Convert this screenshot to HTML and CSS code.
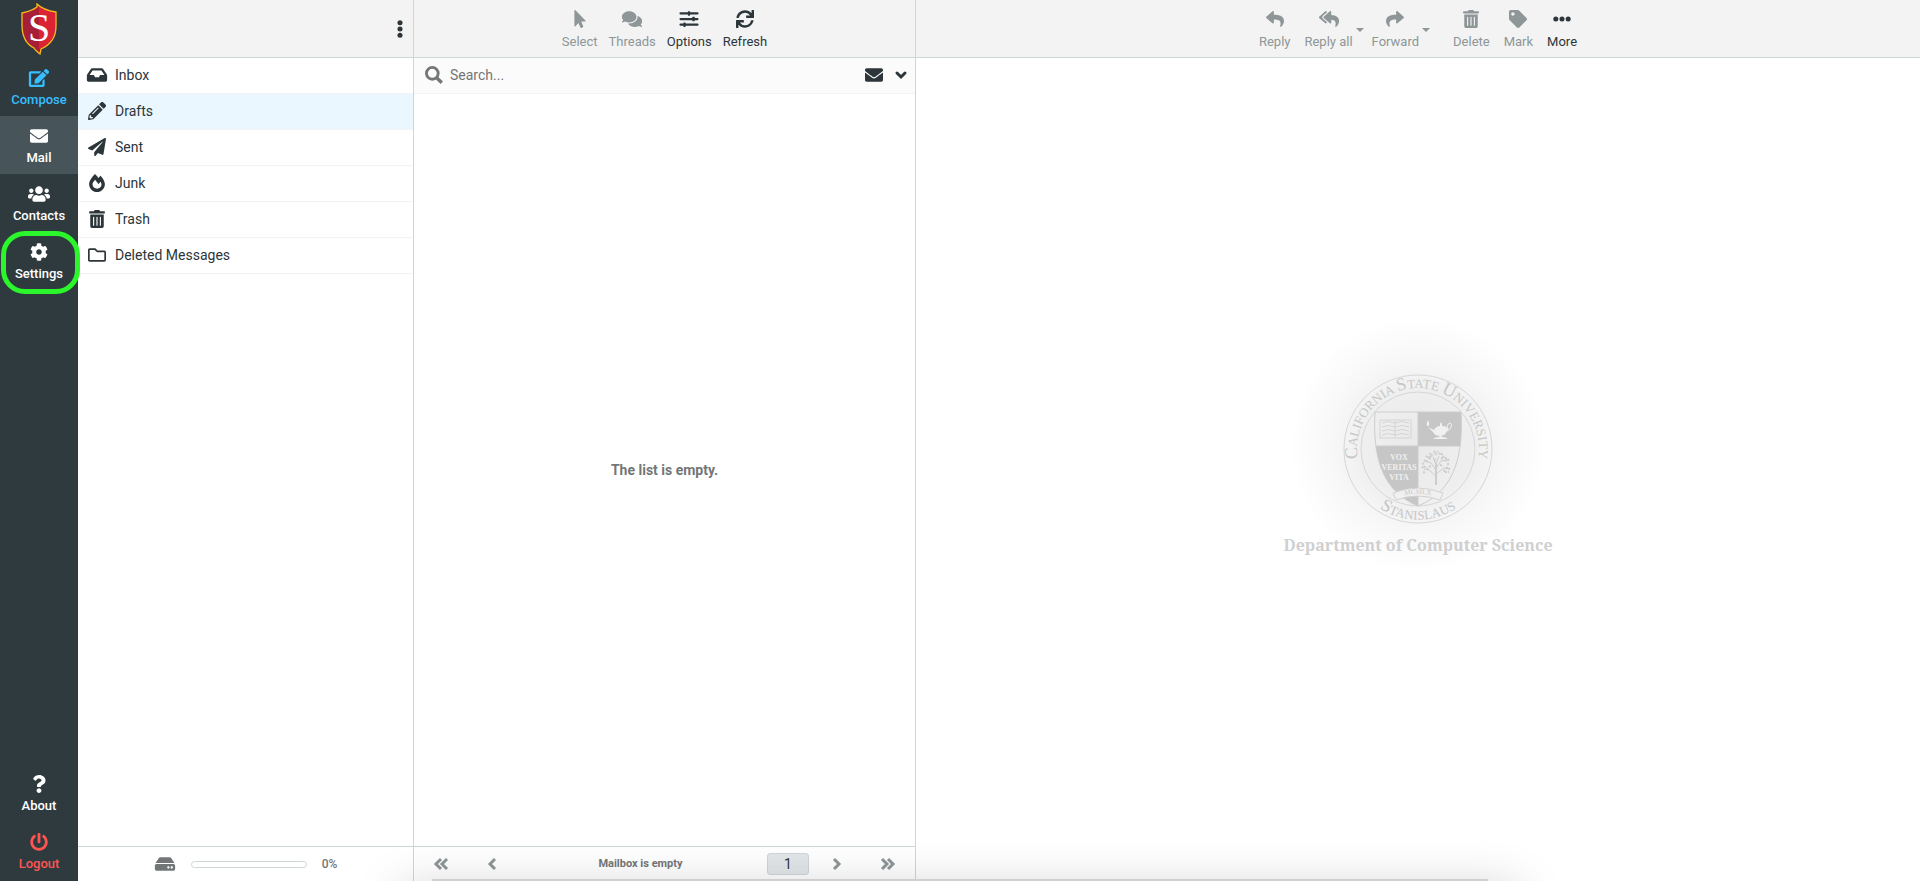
FILE: index.html
```html
<!DOCTYPE html>
<html lang="en">
<head>
    <meta charset="UTF-8">
    <title>Webmail - Drafts</title>
    <link rel="stylesheet" href="styles.css">
</head>
<body>
    <!-- icon set -->
    <svg class="sprite" aria-hidden="true">
        <symbol id="compose" viewBox="0 0 576 512"><path d="M402.600 83.200l90.200 90.200c3.800 3.800 3.800 10 0 13.800L274.400 405.600l-92.800 10.300c-12.400 1.400-22.900-9.100-21.500-21.500l10.300-92.800L388.800 83.200c3.800-3.800 10-3.800 13.800 0zm162-22.900l-48.800-48.800c-15.200-15.200-39.900-15.200-55.200 0l-35.400 35.400c-3.800 3.800-3.800 10 0 13.800l90.200 90.200c3.800 3.800 10 3.800 13.800 0l35.400-35.400c15.200-15.300 15.200-40 0-55.200zM384 346.200V448H64V128h229.800c3.200 0 6.200-1.300 8.500-3.500l40-40c7.600-7.600 2.200-20.500-8.500-20.500H48C21.500 64 0 85.500 0 112v352c0 26.500 21.500 48 48 48h352c26.500 0 48-21.500 48-48V306.200c0-10.700-12.900-16-20.500-8.500l-40 40c-2.200 2.300-3.500 5.300-3.500 8.500z"/></symbol>
        <symbol id="envelope" viewBox="0 0 512 512"><path d="M502.300 190.800c3.900-3.100 9.700-.2 9.700 4.700V400c0 26.500-21.500 48-48 48H48c-26.500 0-48-21.500-48-48V195.600c0-5 5.700-7.800 9.700-4.700 22.400 17.400 52.100 39.500 154.100 113.600 21.100 15.400 56.700 47.800 92.200 47.600 35.700.3 72-32.800 92.300-47.600 102-74.100 131.600-96.300 154-113.700zM256 320c23.200.4 56.600-29.200 73.400-41.400 132.700-96.300 142.800-104.700 173.400-128.700 5.800-4.500 9.200-11.500 9.200-18.900v-19c0-26.500-21.500-48-48-48H48c-26.500 0-48 21.500-48 48v19c0 7.400 3.400 14.300 9.200 18.900 30.600 23.900 40.700 32.400 173.400 128.700 16.800 12.200 50.200 41.800 73.400 41.400z"/></symbol>
        <symbol id="users" viewBox="0 0 640 512"><path d="M96 224c35.300 0 64-28.700 64-64s-28.700-64-64-64-64 28.700-64 64 28.700 64 64 64zm448 0c35.300 0 64-28.700 64-64s-28.700-64-64-64-64 28.700-64 64 28.700 64 64 64zm32 32h-64c-17.600 0-33.500 7.100-45.100 18.600 40.300 22.100 68.900 62 75.100 109.400h66c17.700 0 32-14.300 32-32v-32c0-35.300-28.700-64-64-64zm-256 0c61.900 0 112-50.100 112-112S381.900 32 320 32 208 82.100 208 144s50.100 112 112 112zm76.800 32h-8.300c-20.800 10-43.900 16-68.500 16s-47.600-6-68.500-16h-8.300C179.600 288 128 339.600 128 403.200V432c0 26.500 21.500 48 48 48h288c26.500 0 48-21.500 48-48v-28.800c0-63.600-51.600-115.200-115.200-115.200zm-223.700-13.400C161.500 263.100 145.600 256 128 256H64c-35.300 0-64 28.700-64 64v32c0 17.700 14.300 32 32 32h65.900c6.300-47.400 34.900-87.300 75.200-109.400z"/></symbol>
        <symbol id="cog" viewBox="0 0 512 512"><path d="M487.400 315.700l-42.600-24.600c4.300-23.200 4.300-47 0-70.200l42.600-24.600c4.900-2.800 7.100-8.600 5.500-14-11.100-35.600-30-67.800-54.700-94.600-3.800-4.100-10-5.100-14.800-2.300L380.800 110c-17.900-15.400-38.500-27.300-60.800-35.100V25.800c0-5.600-3.900-10.500-9.400-11.700-36.700-8.200-74.300-7.800-109.200 0-5.500 1.200-9.400 6.100-9.400 11.700V75c-22.200 7.900-42.800 19.800-60.800 35.100L88.700 85.500c-4.900-2.800-11-1.900-14.800 2.300-24.700 26.700-43.600 58.900-54.700 94.600-1.700 5.400.6 11.200 5.500 14L67.300 221c-4.300 23.200-4.300 47 0 70.200l-42.600 24.600c-4.900 2.800-7.100 8.600-5.500 14 11.100 35.600 30 67.800 54.700 94.600 3.800 4.100 10 5.100 14.800 2.300l42.600-24.600c17.900 15.400 38.500 27.300 60.800 35.100v49.200c0 5.600 3.900 10.500 9.400 11.700 36.700 8.200 74.300 7.800 109.200 0 5.500-1.200 9.400-6.100 9.400-11.700v-49.200c22.200-7.900 42.800-19.800 60.800-35.100l42.600 24.600c4.900 2.800 11 1.900 14.800-2.300 24.700-26.700 43.600-58.900 54.700-94.600 1.500-5.500-.7-11.300-5.600-14.100zM256 336c-44.100 0-80-35.900-80-80s35.900-80 80-80 80 35.900 80 80-35.900 80-80 80z"/></symbol>
        <symbol id="question" viewBox="0 0 384 512"><path d="M202 0C122 0 70.500 32.700 29.900 91c-7.400 10.600-5.100 25.100 5.200 32.900l43.100 32.700c10.400 7.900 25.100 6 33.300-4.100 25-31.400 43.600-49.500 82.700-49.500 30.800 0 68.800 19.800 68.800 49.600 0 22.600-18.600 34.200-49 51.200-35.400 19.900-82.300 44.600-82.300 106.400V320c0 13.300 10.700 24 24 24h72.500c13.300 0 24-10.700 24-24v-5.800c0-42.900 125.300-44.600 125.300-160.600C377.500 66.300 286.900 0 202 0zM192 373.500c-38.200 0-69.300 31-69.300 69.200S153.800 512 192 512s69.300-31.100 69.300-69.300-31.100-69.200-69.300-69.200z"/></symbol>
        <symbol id="power" viewBox="0 0 512 512"><path d="M400 54.100c63 45 104 118.600 104 201.900 0 136.800-110.800 247.700-247.500 248C120 504.300 8.200 393 8 256.400 7.900 173.100 48.900 99.300 111.800 54.200c11.700-8.300 28-4.800 35 7.700L162.600 90c5.900 10.500 3.100 23.800-6.600 31-41.500 30.800-68 79.600-68 134.900-.1 92.300 74.500 168.100 168 168.100 91.600 0 168.600-74.200 168-169.100-.3-51.800-24.700-101.800-68.100-134-9.700-7.200-12.400-20.500-6.500-30.900l15.800-28.100c7-12.400 23.200-16.100 34.800-7.800zM296 264V24c0-13.300-10.700-24-24-24h-32c-13.300 0-24 10.700-24 24v240c0 13.300 10.700 24 24 24h32c13.300 0 24-10.700 24-24z"/></symbol>
        <symbol id="inbox" viewBox="0 0 576 512"><path d="M567.900 243.900L462.200 85.400A48 48 0 0 0 422.300 64H153.700a48 48 0 0 0-39.900 21.400L8.100 243.900A48 48 0 0 0 0 270.500V400c0 26.500 21.500 48 48 48h480c26.500 0 48-21.500 48-48V270.500a48 48 0 0 0-8.100-26.600zM162.300 128h251.400l85.400 128H376l-32 64H232l-32-64H76.900z"/></symbol>
        <symbol id="pencil" viewBox="0 0 512 512"><path d="M497.900 142.100l-46.100 46.100c-4.700 4.700-12.300 4.700-17 0l-111-111c-4.700-4.700-4.700-12.300 0-17l46.100-46.100c18.700-18.700 49.100-18.700 67.900 0l60.100 60.100c18.800 18.700 18.800 49.100 0 67.900zM284.200 99.800L21.600 362.400.4 483.900c-2.900 16.400 11.400 30.600 27.800 27.800l121.500-21.300 262.600-262.600c4.700-4.700 4.700-12.300 0-17l-111-111c-4.800-4.700-12.400-4.700-17.100 0zM124.100 339.900c-5.500-5.500-5.500-14.300 0-19.800l154-154c5.500-5.500 14.300-5.500 19.800 0s5.500 14.300 0 19.800l-154 154c-5.500 5.500-14.300 5.500-19.800 0zM88 424h48v36.300l-64.500 11.300-31.100-31.100L51.700 376H88v48z"/></symbol>
        <symbol id="plane" viewBox="0 0 512 512"><path d="M476 3.200L12.500 270.600c-18.100 10.400-15.800 35.600 2.200 43.200L121 358.400l287.300-253.200c5.500-4.900 13.300 2.600 8.600 8.300L176 407v80.500c0 23.600 28.500 32.900 42.500 15.800L282 426l124.600 52.200c14.200 6 30.400-2.900 33-18.200l72-432C515 7.800 493.300-6.800 476 3.200z"/></symbol>
        <symbol id="fire" viewBox="0 0 448 512"><path d="M323.600 51.200c-20.800 19.300-39.600 39.600-56.300 60C240.100 73.600 206.300 35.500 168 0 69.700 91.200 0 210 0 281.600 0 408.900 100.300 512 224 512s224-103.100 224-230.400c0-53.300-52-163.100-124.400-230.400zM304.100 391.900C282.400 407 255.700 416 226.900 416 154.700 416 96 368.300 96 290.800c0-38.700 24.300-72.700 72.800-130.800 6.900 8 98.800 125.300 98.800 125.300l58.600-66.800c4.200 6.800 7.900 13.500 11.300 19.900 27.400 52.200 15.800 119-33.400 153.500z"/></symbol>
        <symbol id="trash" viewBox="0 0 448 512"><path d="M32 464a48 48 0 0 0 48 48h288a48 48 0 0 0 48-48V128H32zm272-256a16 16 0 0 1 32 0v224a16 16 0 0 1-32 0zm-96 0a16 16 0 0 1 32 0v224a16 16 0 0 1-32 0zm-96 0a16 16 0 0 1 32 0v224a16 16 0 0 1-32 0zM432 32H312l-9.400-18.700A24 24 0 0 0 281.100 0H166.800a23.700 23.700 0 0 0-21.400 13.300L136 32H16A16 16 0 0 0 0 48v32a16 16 0 0 0 16 16h416a16 16 0 0 0 16-16V48a16 16 0 0 0-16-16z"/></symbol>
        <symbol id="folder" viewBox="0 0 512 512"><path d="M464 128H272l-54.600-54.600c-6-6-14.200-9.400-22.700-9.400H48C21.500 64 0 85.500 0 112v288c0 26.500 21.500 48 48 48h416c26.500 0 48-21.500 48-48V176c0-26.500-21.500-48-48-48zm0 272H48V112h140.100l54.700 54.600c6 6 14.100 9.400 22.600 9.400H464v224z"/></symbol>
        <symbol id="disk" viewBox="0 0 576 512"><path d="M576 304v96c0 26.500-21.500 48-48 48H48c-26.500 0-48-21.500-48-48v-96c0-26.500 21.500-48 48-48h480c26.500 0 48 21.500 48 48zm-48-80a79.600 79.600 0 0 1 30.800 6.200L462.200 85.400A48 48 0 0 0 422.300 64H153.700a48 48 0 0 0-39.900 21.400L17.200 230.200A79.600 79.600 0 0 1 48 224h480zm-48 96c-17.700 0-32 14.300-32 32s14.300 32 32 32 32-14.300 32-32-14.300-32-32-32zm-96 0c-17.700 0-32 14.300-32 32s14.300 32 32 32 32-14.300 32-32-14.300-32-32-32z"/></symbol>
        <symbol id="pointer" viewBox="0 0 320 512"><path d="M302.200 329.100H196.100l55.800 136c3.900 9.400-.5 20-9.400 24l-49.200 21.400c-9.100 4-19.400-.5-23.300-9.700l-53-129.100-86.700 89.100C18.700 472.700 0 463.600 0 448V18.300C0 1.900 19.900-6.100 30.300 5.400l284.400 292.600c11.500 11.200 3 31.100-12.500 31.100z"/></symbol>
        <symbol id="comments" viewBox="0 0 576 512"><path d="M416 192c0-88.400-93.100-160-208-160S0 103.600 0 192c0 34.300 14.100 65.900 38 92-13.400 30.200-35.500 54.200-35.800 54.500-2.200 2.300-2.800 5.700-1.500 8.700S4.800 352 8 352c36.600 0 66.900-12.300 88.700-25 32.200 15.700 70.300 25 111.300 25 114.900 0 208-71.600 208-160zm122 220c23.900-26 38-57.700 38-92 0-66.900-53.500-124.200-129.300-148.100.9 6.600 1.300 13.300 1.300 20.100 0 105.900-107.700 192-240 192-10.800 0-21.300-.8-31.700-1.900C207.800 439.600 281.800 480 368 480c41 0 79.100-9.200 111.300-25 21.800 12.700 52.100 25 88.700 25 3.200 0 6.100-1.900 7.300-4.800 1.300-2.900.7-6.300-1.500-8.700-.3-.3-22.400-24.200-35.800-54.500z"/></symbol>
        <symbol id="sliders" viewBox="0 0 512 512"><path d="M16 64h480a16 16 0 0 1 0 64H16a16 16 0 0 1 0-64zM16 224h480a16 16 0 0 1 0 64H16a16 16 0 0 1 0-64zM16 384h480a16 16 0 0 1 0 64H16a16 16 0 0 1 0-64z"/><rect x="224" y="32" width="64" height="128" rx="16"/><rect x="352" y="192" width="64" height="128" rx="16"/><rect x="96" y="352" width="64" height="128" rx="16"/></symbol>
        <symbol id="sync" viewBox="0 0 512 512"><path d="M440.700 12.600l4 82.700A247.200 247.200 0 0 0 255.800 8C134.700 8 33.900 94.900 12.300 209.800A12 12 0 0 0 24.100 224h49a12 12 0 0 0 11.700-9.300 175.900 175.900 0 0 1 317-56.900l-101.500-4.900a12 12 0 0 0-12.500 12v47.400a12 12 0 0 0 12 12H500a12 12 0 0 0 12-12V12a12 12 0 0 0-12-12h-47.400a12 12 0 0 0-11.900 12.600zM255.800 432a175.600 175.600 0 0 1-146-77.800l101.800 4.900a12 12 0 0 0 12.600-12v-47.400a12 12 0 0 0-12-12H12a12 12 0 0 0-12 12V500a12 12 0 0 0 12 12h47.400a12 12 0 0 0 12-12.600l-4.200-82.600A247.200 247.200 0 0 0 255.800 504c121.100 0 222-86.900 243.600-201.800a12 12 0 0 0-11.800-14.200h-49.100a12 12 0 0 0-11.600 9.300A175.900 175.900 0 0 1 255.800 432z"/></symbol>
        <symbol id="reply" viewBox="0 0 512 512"><path d="M8.300 189.800l176-152C199.700 24.500 224 35.300 224 56v80.100c160.600 1.800 288 34 288 186.200 0 61.500-39.600 122.300-83.300 154.200-13.700 9.900-33.100-2.600-28.100-18.700 45.300-145-21.500-183.500-176.600-185.700V360c0 20.700-24.300 31.500-39.700 18.200l-176-152c-11.100-9.600-11.100-26.800 0-36.400z"/></symbol>
        <symbol id="reply-all" viewBox="0 0 576 512"><path d="M136.300 189.800l176-152C327.700 24.500 352 35.300 352 56v82.800c129.200 10.200 224 52.200 224 183.500 0 61.500-39.600 122.300-83.300 154.200-13.700 9.900-33.100-2.600-28.100-18.700 38.500-123.200-3.900-169.500-112.600-182V360c0 20.700-24.300 31.500-39.700 18.200l-176-152c-11.100-9.600-11.100-26.800 0-36.400zm-128 36.400l176 152C199.700 391.400 224 380.700 224 360v-15.800l-108.600-93.800a56 56 0 0 1 0-84.800L224 71.800V56c0-20.700-24.300-31.500-39.700-18.200l-176 152c-11.100 9.600-11.100 26.800 0 36.400z"/></symbol>
        <symbol id="forward" viewBox="0 0 512 512"><path transform="translate(512 0) scale(-1 1)" d="M8.300 189.800l176-152C199.700 24.500 224 35.300 224 56v80.100c160.600 1.800 288 34 288 186.200 0 61.500-39.600 122.300-83.300 154.200-13.700 9.900-33.100-2.600-28.100-18.700 45.300-145-21.500-183.500-176.600-185.700V360c0 20.700-24.300 31.500-39.700 18.200l-176-152c-11.100-9.600-11.100-26.800 0-36.400z"/></symbol>
        <symbol id="tag" viewBox="0 0 512 512"><path d="M0 252.100V48C0 21.500 21.500 0 48 0h204.100a48 48 0 0 1 34 14.100l211.800 211.800c18.800 18.800 18.800 49.200 0 67.900L293.800 497.900c-18.700 18.800-49.100 18.800-67.900 0L14.100 286.100A48 48 0 0 1 0 252.100zM112 64c-26.500 0-48 21.500-48 48s21.500 48 48 48 48-21.500 48-48-21.500-48-48-48z"/></symbol>
        <symbol id="dots" viewBox="0 0 512 512"><circle cx="80" cy="256" r="72"/><circle cx="256" cy="256" r="72"/><circle cx="432" cy="256" r="72"/></symbol>
        <symbol id="dots-v" viewBox="0 0 512 512"><circle cx="256" cy="80" r="72"/><circle cx="256" cy="256" r="72"/><circle cx="256" cy="432" r="72"/></symbol>
        <symbol id="search" viewBox="0 0 512 512"><g fill="none" stroke="currentColor"><circle cx="208" cy="208" r="168" stroke-width="80"/><path d="M340 340l136 136" stroke-width="96"/></g></symbol>
        <symbol id="down" viewBox="0 0 18 18"><path d="M5 7l4 4 4-4" fill="none" stroke="currentColor" stroke-width="3" stroke-linecap="round"/></symbol>
        <symbol id="prev" viewBox="0 0 18 18"><path d="M11 4L6 9l5 5" fill="none" stroke="currentColor" stroke-width="3"/></symbol>
        <symbol id="next" viewBox="0 0 18 18"><path d="M7 4l5 5-5 5" fill="none" stroke="currentColor" stroke-width="3"/></symbol>
        <symbol id="first" viewBox="0 0 18 18"><path d="M9 4L4 9l5 5M15 4l-5 5 5 5" fill="none" stroke="currentColor" stroke-width="3"/></symbol>
        <symbol id="last" viewBox="0 0 18 18"><path d="M3 4l5 5-5 5M9 4l5 5-5 5" fill="none" stroke="currentColor" stroke-width="3"/></symbol>
    </svg>

    <nav class="taskmenu">
        <svg class="logo" viewBox="0 0 36 52" role="img" aria-label="Stanislaus">
            <path d="M1 10C6 9 12 7 16 4V1c4 4 12 7 19 8v14c0 12-6 19-15 23l-1 5c-4-3-5-4-6-6C5 41 1 33 1 22z" fill="#a71f36"/>
            <path d="M18 3c5 3 11 5 16 6v14c0 12-6 19-15 23l-1-1z" fill="#dc2334"/>
            <path d="M1 10C6 9 12 7 16 4V1c4 4 12 7 19 8v14c0 12-6 19-15 23l-1 5c-4-3-5-4-6-6C5 41 1 33 1 22z" fill="none" stroke="#f6bd1e" stroke-width="1.300"/>
            <text x="18" y="38" text-anchor="middle" class="logo-letter">S</text>
        </svg>
        <a href="#" class="task compose"><svg class="icon"><use href="#compose"/></svg>Compose</a>
        <a href="#" class="task selected"><svg class="icon"><use href="#envelope"/></svg>Mail</a>
        <a href="#" class="task"><svg class="icon"><use href="#users"/></svg>Contacts</a>
        <a href="#" class="task marked"><svg class="icon"><use href="#cog"/></svg>Settings</a>
        <div class="task-bottom">
            <a href="#" class="task"><svg class="icon"><use href="#question"/></svg>About</a>
            <a href="#" class="task logout"><svg class="icon"><use href="#power"/></svg>Logout</a>
        </div>
    </nav>

    <section class="folders">
        <header class="header header-right">
            <button class="icon-button" aria-label="Folder actions"><svg class="icon"><use href="#dots-v"/></svg></button>
        </header>
        <ul class="folder-list">
            <li><a href="#"><svg class="icon"><use href="#inbox"/></svg>Inbox</a></li>
            <li class="selected"><a href="#"><svg class="icon"><use href="#pencil"/></svg>Drafts</a></li>
            <li><a href="#"><svg class="icon"><use href="#plane"/></svg>Sent</a></li>
            <li><a href="#"><svg class="icon"><use href="#fire"/></svg>Junk</a></li>
            <li><a href="#"><svg class="icon"><use href="#trash"/></svg>Trash</a></li>
            <li><a href="#"><svg class="icon"><use href="#folder"/></svg>Deleted Messages</a></li>
        </ul>
        <footer class="footer quota">
            <svg class="icon"><use href="#disk"/></svg>
            <span class="quota-bar"></span>
            <span>0%</span>
        </footer>
    </section>

    <section class="messages">
        <header class="header">
            <button class="tool" disabled><svg class="icon"><use href="#pointer"/></svg>Select</button>
            <button class="tool" disabled><svg class="icon"><use href="#comments"/></svg>Threads</button>
            <button class="tool"><svg class="icon"><use href="#sliders"/></svg>Options</button>
            <button class="tool"><svg class="icon"><use href="#sync"/></svg>Refresh</button>
        </header>
        <form class="searchbar">
            <label for="search-box" aria-label="Search"><svg class="icon"><use href="#search"/></svg></label>
            <input type="text" id="search-box" placeholder="Search...">
            <button type="button" class="icon-button" aria-label="Unread"><svg class="icon"><use href="#envelope"/></svg></button>
            <button type="button" class="icon-button" aria-label="Search options"><svg class="icon"><use href="#down"/></svg></button>
        </form>
        <p class="empty">The list is empty.</p>
        <footer class="footer pager">
            <button class="icon-button" disabled aria-label="First page"><svg class="icon"><use href="#first"/></svg></button>
            <button class="icon-button" disabled aria-label="Previous page"><svg class="icon"><use href="#prev"/></svg></button>
            <span class="pager-text">Mailbox is empty</span>
            <input type="text" class="page-number" aria-label="Page" value="1">
            <button class="icon-button" disabled aria-label="Next page"><svg class="icon"><use href="#next"/></svg></button>
            <button class="icon-button" disabled aria-label="Last page"><svg class="icon"><use href="#last"/></svg></button>
        </footer>
    </section>

    <main class="content">
        <header class="header">
            <button class="tool" disabled><svg class="icon"><use href="#reply"/></svg>Reply</button>
            <button class="tool" disabled><svg class="icon"><use href="#reply-all"/></svg>Reply all</button>
            <button class="caret" disabled aria-label="Reply options"></button>
            <button class="tool" disabled><svg class="icon"><use href="#forward"/></svg>Forward</button>
            <button class="caret" disabled aria-label="Forward options"></button>
            <button class="tool spaced" disabled><svg class="icon"><use href="#trash"/></svg>Delete</button>
            <button class="tool" disabled><svg class="icon"><use href="#tag"/></svg>Mark</button>
            <button class="tool"><svg class="icon"><use href="#dots"/></svg>More</button>
        </header>
        <div class="watermark">
            <svg class="seal" viewBox="0 0 150 150" role="img" aria-label="California State University Stanislaus">
                <defs>
                    <path id="arc-top" d="M17 94A61 61 0 1 1 133 94"/>
                    <path id="arc-bottom" d="M20 119A70 70 0 0 0 130 119"/>
                    <path id="arc-ribbon" d="M52 124Q75 116 98 124"/>
                    <clipPath id="shield"><path d="M32 38h86c2 40-4 78-43 94C36 116 30 78 32 38z"/></clipPath>
                </defs>
                <g fill="none" stroke="#d6d6d6">
                    <circle cx="75" cy="75" r="74"/>
                    <circle cx="75" cy="75" r="57"/>
                </g>
                <g clip-path="url(#shield)">
                    <path d="M75 38h50v34H75zM25 72h50v70H25z" fill="#c6c6c6"/>
                </g>
                <path d="M32 38h86c2 40-4 78-43 94C36 116 30 78 32 38zM75 38v94M33 72h84" fill="none" stroke="#cdcdcd"/>
                <!-- book -->
                <path d="M37 46h31v18H37zM52 47v16M39 49q6-3 13 0 7-3 14 0M39 53q6-3 13 0 7-3 14 0M39 57q6-3 13 0 7-3 14 0M39 61q6-3 13 0 7-3 14 0" fill="none" stroke="#d4d4d4"/>
                <!-- lamp -->
                <g fill="#f0f0f0">
                    <path d="M85 53l6 3q2-4 6-4v-2l1-2 1 2v2q5 0 6 3l-2 4q-2 3-5 3l1 1q4 0 6 2H90q2-2 6-2l1-1q-5 0-7-4zM84 52q-1-2 1-6 2 3 1 6z"/>
                    <path d="M104 57q2-2 0-4 1-4 3-4 3 1 1 4-1 3-4 4" fill="none" stroke="#f0f0f0"/>
                </g>
                <!-- tree -->
                <g fill="none" stroke="#cdcdcd">
                    <path d="M93 111V90" stroke-width="2"/>
                    <path d="M93 102l-7-6-5-1M93 100l8-6 4 1M93 96l-5-7-6-2M93 94l5-7 6-1M93 91l-3-8M93 90l3-8"/>
                    <path d="M80 98l3 1M79 94l2-2 2 2M79 90l3-1M81 86l2 2 2-2M83 82l2 2 2-2M87 79l1 3 3-2M91 77l2 3 2-3M96 79l2 2 2-2M100 82l1 2 3 0M102 86l2 1 2-2M104 90l3 0M103 93l3 2 1-2M102 98l4 0M86 92l2 1M97 91l3 1M86 85l2-1M98 84l2 1M91 86l3-1M84 96l1-3M101 96l1 3" stroke-width="2" stroke-dasharray="2 1"/>
                </g>
                <!-- ribbon -->
                <path d="M50 119q25-10 50 0l-3 7q-22-8-44 0z" fill="#f0f0f0" stroke="#d2d2d2"/>
                <g class="seal-text" text-anchor="middle">
                    <text class="seal-name"><textPath href="#arc-top" startOffset="50%"><tspan class="cap">C</tspan>ALIFORNIA <tspan class="cap">S</tspan>TATE <tspan class="cap">U</tspan>NIVERSITY</textPath></text>
                    <text class="seal-name"><textPath href="#arc-bottom" startOffset="50%"><tspan class="cap">S</tspan>TANISLAUS</textPath></text>
                    <text class="seal-year"><textPath href="#arc-ribbon" startOffset="50%">MCMLX</textPath></text>
                </g>
                <g class="seal-motto" text-anchor="middle">
                    <text x="56" y="86">VOX</text>
                    <text x="56" y="96">VERITAS</text>
                    <text x="56" y="106">VITA</text>
                </g>
            </svg>
            <p class="department">Department of Computer Science</p>
        </div>
    </main>

    <div class="window-shadow"></div>
</body>
</html>
```
FILE: styles.css
```css
:root {
    --dark: #2f3a3f;
    --text: #2c363a;
    --muted: #8e9698;
    --grey: #737677;
    --border: #ced6d9;
    --line: #f1f3f4;
    --header: #f3f3f3;
}

* {
    box-sizing: border-box;
    margin: 0;
    padding: 0;
}

body {
    display: flex;
    height: 100vh;
    overflow: hidden;
    position: relative;
    background: #fff;
    color: var(--text);
    font: 14px/20px Roboto, sans-serif;
}

/* shadow along the bottom edge */
.window-shadow {
    position: absolute;
    left: 78px;
    right: 0;
    bottom: 0;
    height: 60px;
    padding: 58px 432px 0 354px;
    overflow: hidden;
    pointer-events: none;
}

.window-shadow::after {
    content: "";
    display: block;
    height: 2px;
    background: #cfcfcf;
    box-shadow: 0 40px 50px 30px rgba(0, 0, 0, 0.2);
}

a {
    color: inherit;
    text-decoration: none;
}

button,
input {
    font: inherit;
    color: inherit;
    border: 0;
    background: none;
}

.sprite {
    position: absolute;
    width: 0;
    height: 0;
}

.icon {
    display: block;
    flex: none;
    width: 22px;
    height: 18px;
    fill: currentColor;
}

/* task menu */
.taskmenu {
    display: flex;
    flex-direction: column;
    flex: none;
    width: 78px;
    padding-bottom: 1px;
    background: var(--dark);
    color: #fff;
}

.logo {
    width: 36px;
    height: 52px;
    margin: 3px auto;
}

.logo-letter {
    font: 40px "Liberation Serif", serif;
    fill: #fff;
}

.task {
    position: relative;
    display: flex;
    flex-direction: column;
    align-items: center;
    gap: 3px;
    height: 58px;
    padding-top: 11px;
    font-size: 13px;
    font-weight: 500;
}

.task.selected {
    background: #47555b;
}

.compose {
    color: #37beff;
}

.logout {
    color: #ff5552;
}

.task-bottom {
    margin-top: auto;
}

.marked::after {
    content: "";
    position: absolute;
    inset: -1px -2px -4px 1px;
    border: 5px solid #2bf52b;
    border-radius: 24px;
}

/* columns */
.folders,
.messages {
    display: flex;
    flex-direction: column;
    border-right: 1px solid var(--border);
}

.folders {
    flex: 0 0 336px;
}

.messages {
    flex: 0 0 502px;
}

.content {
    display: flex;
    flex-direction: column;
    flex: 1;
}

.header {
    display: flex;
    flex: none;
    justify-content: center;
    gap: 11px;
    height: 58px;
    padding-top: 10px;
    border-bottom: 1px solid var(--border);
    background: var(--header);
}

.content .header {
    gap: 14px;
}

.header-right {
    justify-content: flex-end;
    padding: 0 2px 0 0;
}

.footer {
    display: flex;
    flex: none;
    align-items: center;
    height: 35px;
    margin-top: auto;
    border-top: 1px solid var(--border);
    color: var(--grey);
    font-size: 12px;
    font-weight: 500;
}

.tool {
    display: flex;
    flex-direction: column;
    align-items: center;
    gap: 4px;
    height: 42px;
    font-size: 13px;
}

.tool:disabled,
.caret:disabled,
.pager .icon-button {
    color: var(--muted);
}

.spaced {
    margin-left: 15px;
}

.caret {
    align-self: flex-start;
    margin: 18px -6px 0 -11px;
    border: 4px solid transparent;
    border-top-color: currentColor;
    border-bottom: 0;
}

.icon-button {
    display: flex;
    align-items: center;
    justify-content: center;
    width: 22px;
}

/* folders */
.folder-list {
    list-style: none;
}

.folder-list li {
    height: 36px;
    border-bottom: 1px solid var(--line);
}

.folder-list .selected {
    background: #eaf7fe;
}

.folder-list a {
    display: flex;
    align-items: center;
    gap: 7px;
    height: 34px;
    padding-left: 8px;
}

.quota {
    justify-content: center;
    gap: 15px;
}

.quota-bar {
    width: 116px;
    height: 7px;
    border: 1px solid var(--border);
    border-radius: 4px;
}

/* message list */
.searchbar {
    display: flex;
    flex: none;
    align-items: center;
    gap: 5px;
    height: 36px;
    padding: 0 3px 1px 9px;
    border-bottom: 1px solid var(--line);
    background: #fbfbfb;
}

.searchbar label {
    color: var(--grey);
}

.searchbar input {
    flex: 1;
    outline: 0;
}

.searchbar input::placeholder {
    color: var(--grey);
}

.empty {
    margin: auto;
    color: var(--grey);
    font-weight: 700;
}

.pager {
    gap: 30px;
    margin-top: 0;
    padding: 0 16px;
}

.pager-text {
    flex: 1;
    padding-right: 20px;
    font-size: 11px;
    font-weight: 700;
    text-align: center;
}

.page-number {
    width: 42px;
    height: 22px;
    margin: 0 -14px 0 -30px;
    border: 1px solid var(--border);
    border-radius: 3px;
    background: #e2e6e9;
    color: var(--text);
    font-size: 14px;
    font-weight: 400;
    text-align: center;
}

/* start page */
.watermark {
    display: flex;
    flex-direction: column;
    align-items: center;
    justify-content: center;
    flex: 1;
    padding-bottom: 8px;
    background: radial-gradient(circle at 50% 47%, #e9e9e9 0, #efefef 56px, #f7f7f7 84px, #fff 128px);
}

.seal {
    width: 150px;
    height: 150px;
    overflow: visible;
}

.seal-text {
    fill: #c6c6c6;
    font-family: "Liberation Serif", serif;
}

.seal-name {
    font-size: 13px;
}

.seal-name .cap {
    font-size: 18px;
}

.seal-year {
    font-size: 7px;
}

.seal-motto {
    font: 700 8px "Liberation Serif", serif;
    fill: #f0f0f0;
}

.department {
    margin-top: 9px;
    color: #cfcfcf;
    font: 700 16px/24px "Noto Serif", "DejaVu Serif", serif;
}
```
